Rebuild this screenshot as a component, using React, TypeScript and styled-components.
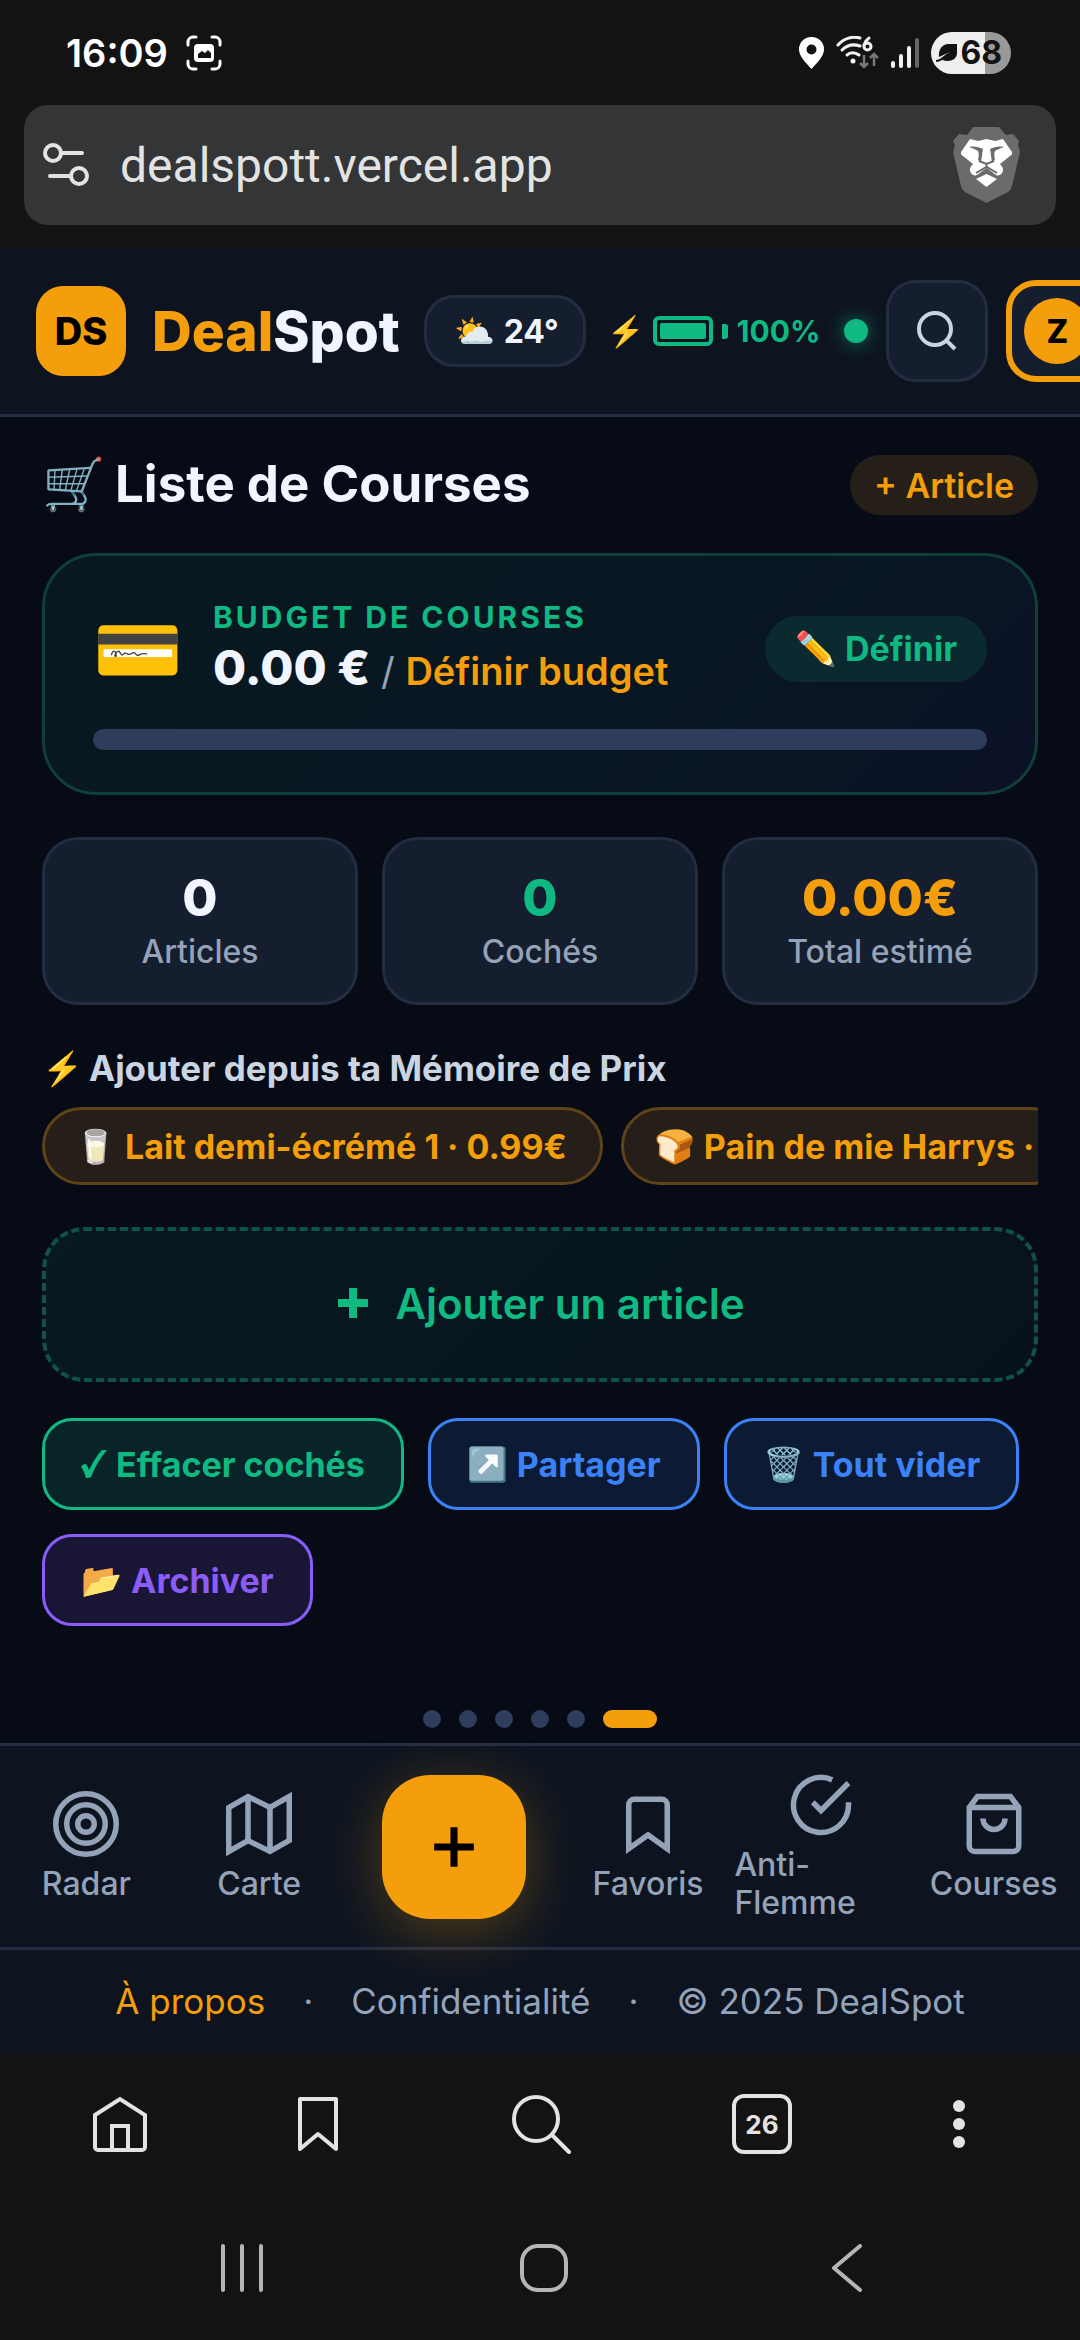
import type { ReactNode } from 'react';
import styled, { createGlobalStyle, css } from 'styled-components';

// ============================================================================
// Theme values
// ============================================================================

const color = {
  chrome: '#131313',
  bg: '#060b16',
  bar: '#0d1420',
  surface: '#151e2e',
  line: '#232d42',
  text: '#f1f5ff',
  soft: '#cbd5e1',
  muted: '#94a3b8',
  orange: '#f59e0b',
  green: '#10b981',
  blue: '#3b82f6',
  purple: '#8b5cf6',
  track: '#2f3d5c',
};

const GlobalStyle = createGlobalStyle`
  * {
    box-sizing: border-box;
  }

  body {
    margin: 0;
    background: ${color.chrome};
    font-family: Inter, 'Noto Sans', sans-serif;
    color: ${color.text};
  }

  button {
    margin: 0;
    padding: 0;
    border: none;
    background: none;
    color: inherit;
    font: inherit;
    cursor: pointer;
  }

  h1, h2, p {
    margin: 0;
  }

  svg {
    display: block;
    flex: none;
  }
`;

// ============================================================================
// Phone status bar and address bar
// ============================================================================

const Page = styled.div`
  display: flex;
  flex-direction: column;
  min-height: 100vh;
  overflow: hidden;
`;

const StatusBar = styled.div`
  display: flex;
  align-items: center;
  justify-content: space-between;
  height: 105px;
  padding: 0 69px 0 66px;
`;

const StatusGroup = styled.div<{ $gap: number }>`
  display: flex;
  align-items: center;
  gap: ${({ $gap }) => $gap}px;
`;

const Clock = styled.span`
  font-size: 38px;
  font-weight: 600;
  color: #fff;
`;

const BatteryPill = styled.span`
  display: flex;
  align-items: center;
  gap: 2px;
  height: 42px;
  padding: 0 9px 0 5px;
  border-radius: 21px;
  background: linear-gradient(90deg, #eee 68%, #999 68%);
  color: #131313;
  font-size: 32px;
  font-weight: 700;
`;

const AddressBar = styled.div`
  display: flex;
  align-items: center;
  height: 120px;
  margin: 0 24px 23px;
  padding: 0 36px 0 18px;
  border-radius: 24px;
  background: #333536;
`;

const AddressInput = styled.input`
  flex: 1;
  min-width: 0;
  margin-left: 30px;
  padding: 0;
  border: none;
  outline: none;
  background: transparent;
  color: #e3e3e3;
  font-family: Roboto, sans-serif;
  font-size: 48px;
`;

// ============================================================================
// App header
// ============================================================================

const Header = styled.header`
  display: flex;
  align-items: center;
  height: 169px;
  padding-left: 36px;
  border-bottom: 3px solid ${color.line};
  background: ${color.bar};
  white-space: nowrap;

  > * {
    flex: none;
  }
`;

const LogoBox = styled.div`
  display: grid;
  place-items: center;
  width: 90px;
  height: 90px;
  border-radius: 27px;
  background: ${color.orange};
  color: #000;
  font-size: 38px;
  font-weight: 800;
`;

const Brand = styled.h1`
  margin-left: 26px;
  font-size: 55px;
  font-weight: 800;

  span {
    color: ${color.orange};
  }
`;

const Weather = styled.div`
  display: flex;
  align-items: center;
  gap: 9px;
  height: 72px;
  margin-left: 24px;
  padding: 0 24px 0 27px;
  border: 3px solid ${color.line};
  border-radius: 30px;
  background: ${color.surface};
  font-size: 32px;
  font-weight: 700;
`;

const Power = styled.div`
  display: flex;
  align-items: center;
  gap: 9px;
  margin-left: 21px;
  color: ${color.green};
  font-size: 30px;
  font-weight: 700;
`;

const Cell = styled.span`
  width: 60px;
  height: 30px;
  padding: 3px;
  border: 4px solid ${color.green};
  border-radius: 6px;

  &::before {
    content: '';
    display: block;
    height: 16px;
    border-radius: 2px;
    background: ${color.green};
  }
`;

const CellTip = styled.span`
  width: 6px;
  height: 15px;
  border-radius: 0 3px 3px 0;
  background: ${color.green};
`;

const OnlineDot = styled.span`
  width: 24px;
  height: 24px;
  margin: 0 18px 0 24px;
  border-radius: 50%;
  background: ${color.green};
  box-shadow: 0 0 18px rgba(16, 185, 129, 0.6);
`;

const SquareButton = styled.button<{ $accent?: boolean }>`
  display: grid;
  place-items: center;
  width: 102px;
  height: 102px;
  margin-right: 18px;
  border: 3px solid ${color.line};
  border-radius: 30px;
  background: ${color.surface};
  color: ${color.soft};

  ${({ $accent }) =>
    $accent &&
    css`
      border: 6px solid ${color.orange};
    `}
`;

const Avatar = styled.span`
  display: grid;
  place-items: center;
  width: 66px;
  height: 66px;
  border-radius: 50%;
  background: ${color.orange};
  color: #000;
  font-size: 32px;
  font-weight: 800;
`;

// ============================================================================
// Shopping list
// ============================================================================

const Main = styled.main`
  flex: 1;
  display: flex;
  flex-direction: column;
  padding: 38px 42px 15px;
  background: ${color.bg};
`;

const TitleRow = styled.div`
  display: flex;
  align-items: center;
  justify-content: space-between;
  height: 60px;
`;

const Title = styled.h2`
  display: flex;
  align-items: center;
  gap: 9px;
  padding-bottom: 3px;
  font-size: 51px;
  font-weight: 700;
`;

const AddPill = styled.button`
  height: 60px;
  padding: 0 24px;
  border-radius: 30px;
  background: #261e18;
  color: ${color.orange};
  font-size: 34px;
  font-weight: 600;
`;

const BudgetCard = styled.section`
  margin-top: 38px;
  padding: 42px 48px;
  border: 3px solid #103e3a;
  border-radius: 54px;
  background: linear-gradient(135deg, #07191f, #091623 70%, #0b1127);
`;

const BudgetTop = styled.div`
  display: flex;
  align-items: center;
  height: 101px;
`;

const BudgetText = styled.div`
  flex: 1;
  margin-left: 30px;
  padding-top: 6px;
`;

const BudgetLabel = styled.p`
  color: ${color.green};
  font-size: 30px;
  font-weight: 700;
  line-height: 36px;
  letter-spacing: 3px;
`;

const BudgetAmount = styled.p`
  color: ${color.muted};
  font-size: 38px;
  line-height: 66px;

  strong {
    color: ${color.text};
    font-size: 48px;
    font-weight: 800;
  }

  em {
    color: ${color.orange};
    font-style: normal;
    font-weight: 600;
  }
`;

const DefineButton = styled.button`
  display: flex;
  align-items: center;
  gap: 9px;
  height: 66px;
  padding: 0 30px;
  border-radius: 33px;
  background: #0b2a30;
  color: ${color.green};
  font-size: 34px;
  font-weight: 700;
`;

const Track = styled.div`
  height: 21px;
  margin-top: 30px;
  border-radius: 11px;
  background: ${color.track};
`;

const Stats = styled.div`
  display: grid;
  grid-template-columns: repeat(3, 1fr);
  gap: 24px;
  margin-top: 42px;
`;

const Stat = styled.div`
  height: 168px;
  padding-top: 25px;
  border: 3px solid ${color.line};
  border-radius: 36px;
  background: ${color.surface};
  text-align: center;
`;

const StatValue = styled.p<{ $color: string }>`
  color: ${({ $color }) => $color};
  font-size: 51px;
  font-weight: 800;
  line-height: 66px;
`;

const StatLabel = styled.p`
  color: ${color.muted};
  font-size: 32px;
  font-weight: 500;
  line-height: 42px;
`;

const SectionTitle = styled.h2`
  display: flex;
  align-items: center;
  gap: 6px;
  height: 42px;
  margin-top: 42px;
  color: ${color.soft};
  font-size: 35px;
  font-weight: 700;
`;

const ChipRow = styled.div`
  display: flex;
  gap: 18px;
  margin-top: 18px;
  overflow: hidden;
`;

const Chip = styled.button`
  flex: none;
  display: flex;
  align-items: center;
  gap: 9px;
  height: 78px;
  padding: 0 33px 0 30px;
  border: 3px solid #5f4318;
  border-radius: 39px;
  background: #261e18;
  color: ${color.orange};
  font-size: 34px;
  font-weight: 700;
  white-space: nowrap;
`;

const AddArticle = styled.button`
  display: flex;
  align-items: center;
  justify-content: center;
  gap: 24px;
  height: 155px;
  margin-top: 42px;
  padding-bottom: 3px;
  border: 4px dashed #105247;
  border-radius: 42px;
  background: linear-gradient(135deg, #071a20, #08121d);
  color: ${color.green};
  font-size: 42px;
  font-weight: 600;
`;

const Actions = styled.div`
  display: flex;
  flex-wrap: wrap;
  gap: 24px;
  margin-top: 36px;
`;

const Action = styled.button<{ $color: string; $bg: string }>`
  display: flex;
  align-items: center;
  gap: 9px;
  height: 92px;
  padding: 0 36px;
  border: 3px solid ${({ $color }) => $color};
  border-radius: 30px;
  background: ${({ $bg }) => $bg};
  color: ${({ $color }) => $color};
  font-size: 34px;
  font-weight: 700;
`;

const Dots = styled.div`
  display: flex;
  justify-content: center;
  gap: 18px;
  margin-top: auto;
`;

const Dot = styled.span<{ $active?: boolean }>`
  width: ${({ $active }) => ($active ? 54 : 18)}px;
  height: 18px;
  border-radius: 9px;
  background: ${({ $active }) => ($active ? color.orange : color.track)};
`;

// ============================================================================
// Bottom bars
// ============================================================================

const TabBar = styled.nav`
  display: grid;
  grid-template-columns: 1fr 1fr 216px 1fr 1fr 1fr;
  align-items: center;
  height: 204px;
  border-top: 3px solid ${color.line};
  background: ${color.bar};
`;

const Tab = styled.button`
  display: flex;
  flex-direction: column;
  align-items: center;
  gap: 8px;
  color: ${color.muted};
  font-size: 32px;
  font-weight: 500;
  line-height: 38px;
  text-align: left;
`;

const Fab = styled.button`
  position: relative;
  display: grid;
  place-items: center;
  justify-self: center;
  width: 144px;
  height: 144px;
  border-radius: 48px;
  background: ${color.orange};
  box-shadow: 0 12px 60px rgba(245, 158, 11, 0.3);
  color: #000;
`;

const Footer = styled.footer`
  display: flex;
  align-items: center;
  justify-content: center;
  gap: 38px;
  height: 105px;
  border-top: 3px solid ${color.line};
  background: ${color.bar};
  color: ${color.muted};
  font-size: 35px;
`;

const FooterLink = styled.a<{ $accent?: boolean }>`
  color: ${({ $accent }) => ($accent ? color.orange : color.muted)};
  text-decoration: none;
`;

const BrowserBar = styled.nav`
  display: grid;
  grid-template-columns: 240fr 156fr 290fr 152fr 242fr;
  place-items: center;
  height: 144px;
  color: #e3e3e3;
`;

const TabCount = styled.span`
  display: grid;
  place-items: center;
  width: 60px;
  height: 60px;
  border: 4px solid #e3e3e3;
  border-radius: 12px;
  font-size: 26px;
  font-weight: 700;
`;

const SystemBar = styled.nav`
  display: grid;
  grid-template-columns: repeat(3, 1fr);
  place-items: center;
  height: 144px;
  padding: 0 82px 0 91px;
  color: #b5b5b5;
`;

// ============================================================================
// Icons
// ============================================================================

const Emoji = styled.span<{ $size: number }>`
  font-size: ${({ $size }) => $size}px;
  line-height: 1;
`;

interface LineIconProps {
  size: number;
  stroke?: number;
  box?: number;
  children: ReactNode;
}

function LineIcon({ size, stroke = 2, box = 24, children }: LineIconProps) {
  return (
    <svg
      width={size}
      height={size}
      viewBox={`0 0 ${box} ${box}`}
      fill="none"
      stroke="currentColor"
      strokeWidth={stroke}
      aria-hidden="true"
    >
      {children}
    </svg>
  );
}

function CaptureIcon() {
  return (
    <svg width="36" height="36" viewBox="0 0 36 36" fill="none" aria-hidden="true">
      <path
        d="M2 10V7a5 5 0 0 1 5-5h3M26 2h3a5 5 0 0 1 5 5v3M34 26v3a5 5 0 0 1-5 5h-3M10 34H7a5 5 0 0 1-5-5v-3"
        stroke="#fff"
        strokeWidth="3"
        strokeLinecap="round"
      />
      <rect x="8" y="9" width="20" height="18" rx="4" fill="#fff" />
      <path d="M12 23v-4l4-3 3 2 3-3 3 3v5z" fill="#131313" />
    </svg>
  );
}

function PinIcon() {
  return (
    <svg width="25" height="32" viewBox="0 0 25 32" aria-hidden="true">
      <path
        d="M12.500 0A12.300 12.300 0 0 0 0 12.500C0 19 7 26 12.500 32 18 26 25 19 25 12.500A12.300 12.300 0 0 0 12.500 0zm0 7.500a5 5 0 1 1 0 10 5 5 0 0 1 0-10z"
        fill="#fff"
        fillRule="evenodd"
      />
    </svg>
  );
}

function WifiIcon() {
  return (
    <svg width="43" height="33" viewBox="0 0 43 33" fill="none" aria-hidden="true">
      <g stroke="#f2f2f2" strokeWidth="3" strokeLinecap="round">
        <path d="M2 9C8 2 17 0 24 2" />
        <path d="M6 14c5-5 12-6 18-4" />
        <path d="M11 19c3-3 8-3 12 0" />
        <path d="M33 2c-3 2-4 4-5 7" />
        <circle cx="31.500" cy="10.500" r="3.500" />
      </g>
      <circle cx="17" cy="25" r="2.500" fill="#f2f2f2" />
      <path d="M28 19v12m-4-4 4 4 4-4M38 30V18m-4 4 4-4 4 4" stroke="#777" strokeWidth="2.500" />
    </svg>
  );
}

function SignalIcon() {
  return (
    <svg width="28" height="30" viewBox="0 0 28 30" strokeWidth="4" strokeLinecap="round" aria-hidden="true">
      <path d="M2 25v3M10 18v10M18 10v18" stroke="#f2f2f2" />
      <path d="M26 2v26" stroke="#666" />
    </svg>
  );
}

function LeafIcon() {
  return (
    <svg width="22" height="20" viewBox="0 0 22 20" aria-hidden="true">
      <path d="M21 1v9c0 5-4 8-10 8-3 0-5-1-6-3l9-6-11 5C2 6 7 0 14 1z" fill="#131313" />
      <path d="M0 18c4 0 8-3 12-7" stroke="#131313" strokeWidth="2" fill="none" />
    </svg>
  );
}

function SiteSettingsIcon() {
  return (
    <svg width="48" height="46" viewBox="0 0 48 46" fill="none" stroke="#e3e3e3" strokeWidth="4" aria-hidden="true">
      <circle cx="11" cy="11" r="8" />
      <circle cx="37" cy="34" r="8" />
      <path d="M19 11h21M8 34h21" strokeLinecap="round" />
    </svg>
  );
}

function BraveIcon() {
  return (
    <svg width="67" height="76" viewBox="0 0 67 76" aria-hidden="true">
      <path
        d="M20 0h26l7 8 7-1 6 7-1 4 2 7-8 34c-1 3-2 4-4 6L33.500 76 12 65c-2-2-3-3-4-6L0 25l2-7-2-4 6-7 8 1z"
        fill="#6b6b6b"
      />
      <path
        d="M17 12l8 2 8.500-2 8.500 2 8-2 9 13c0 2 0 3-2 4l-10 8c3 3 4 6 2 9-1 2-4 3-6 2l-9.500-7-9.500 7c-2 1-5 0-6-2-2-3-1-6 2-9l-10-8c-2-1-2-2-2-4z"
        fill="#fff"
      />
      <path d="M23 52l10.500-5L44 52l-10.500 8z" fill="#fff" />
      {/* brows and sides of the nose */}
      <path d="M16 20c5-1 10 0 14 2-1 4-1 9-2 13l-3-2c1-4 1-7 0-9-3-2-6-3-9-4z" fill="#6b6b6b" />
      <path d="M51 20c-5-1-10 0-14 2 1 4 1 9 2 13l3-2c-1-4-1-7 0-9 3-2 6-3 9-4z" fill="#6b6b6b" />
      <path
        d="M26 34l7.500 3 7.500-3M33.500 41v-4M23 46l10.500-6L44 46"
        stroke="#6b6b6b"
        strokeWidth="2"
        fill="none"
      />
    </svg>
  );
}

function CheckIcon() {
  return (
    <svg width="26" height="28" viewBox="0 0 26 28" aria-hidden="true">
      <path d="M0 17c1-2 3-3 4-3 2 0 3 3 4 6C12 12 16 5 21 0h5C19 8 14 17 10 27c-2 1-4 1-5 1-1-4-3-9-5-11z" fill="currentColor" />
    </svg>
  );
}

// ============================================================================
// Data
// ============================================================================

const stats = [
  { value: '0', label: 'Articles', color: color.text },
  { value: '0', label: 'Cochés', color: color.green },
  { value: '0.00€', label: 'Total estimé', color: color.orange },
];

const memory = [
  { icon: '🥛', text: 'Lait demi-écrémé 1 · 0.99€' },
  { icon: '🍞', text: 'Pain de mie Harrys ·' },
];

// ============================================================================
// Component
// ============================================================================

export default function App() {
  return (
    <Page>
      <GlobalStyle />

      <StatusBar>
        <StatusGroup $gap={18}>
          <Clock>16:09</Clock>
          <CaptureIcon />
        </StatusGroup>
        <StatusGroup $gap={12}>
          <PinIcon />
          <WifiIcon />
          <SignalIcon />
          <BatteryPill>
            <LeafIcon />
            68
          </BatteryPill>
        </StatusGroup>
      </StatusBar>

      <AddressBar>
        <SiteSettingsIcon />
        <AddressInput type="text" aria-label="Adresse" defaultValue="dealspott.vercel.app" />
        <BraveIcon />
      </AddressBar>

      <Header>
        <LogoBox>DS</LogoBox>
        <Brand>
          <span>Deal</span>Spot
        </Brand>
        <Weather>
          <Emoji $size={33}>⛅</Emoji>
          24°
        </Weather>
        <Power>
          <Emoji $size={30}>⚡</Emoji>
          <Cell />
          <CellTip />
          100%
        </Power>
        <OnlineDot />
        <SquareButton type="button" aria-label="Rechercher">
          <LineIcon size={48}>
            <circle cx="11" cy="11" r="8" />
            <path d="m21 21-4.350-4.350" />
          </LineIcon>
        </SquareButton>
        <SquareButton type="button" $accent aria-label="Profil">
          <Avatar>Z</Avatar>
        </SquareButton>
      </Header>

      <Main>
        <TitleRow>
          <Title>
            <Emoji $size={51}>🛒</Emoji>
            Liste de Courses
          </Title>
          <AddPill type="button">+ Article</AddPill>
        </TitleRow>

        <BudgetCard>
          <BudgetTop>
            <Emoji $size={72}>💳</Emoji>
            <BudgetText>
              <BudgetLabel>BUDGET DE COURSES</BudgetLabel>
              <BudgetAmount>
                <strong>0.00 €</strong> / <em>Définir budget</em>
              </BudgetAmount>
            </BudgetText>
            <DefineButton type="button">
              <Emoji $size={33}>✏️</Emoji>
              Définir
            </DefineButton>
          </BudgetTop>
          <Track />
        </BudgetCard>

        <Stats>
          {stats.map((stat) => (
            <Stat key={stat.label}>
              <StatValue $color={stat.color}>{stat.value}</StatValue>
              <StatLabel>{stat.label}</StatLabel>
            </Stat>
          ))}
        </Stats>

        <SectionTitle>
          <Emoji $size={33}>⚡</Emoji>
          Ajouter depuis ta Mémoire de Prix
        </SectionTitle>
        <ChipRow>
          {memory.map((item) => (
            <Chip type="button" key={item.text}>
              <Emoji $size={33}>{item.icon}</Emoji>
              {item.text}
            </Chip>
          ))}
        </ChipRow>

        <AddArticle type="button">
          <LineIcon size={36} stroke={8} box={36}>
            <path d="M18 3v30M3 18h30" />
          </LineIcon>
          Ajouter un article
        </AddArticle>

        <Actions>
          <Action type="button" $color={color.green} $bg="#082428">
            <CheckIcon />
            Effacer cochés
          </Action>
          <Action type="button" $color={color.blue} $bg="#0d1a34">
            <Emoji $size={33}>↗️</Emoji>
            Partager
          </Action>
          <Action type="button" $color={color.blue} $bg="#0d1a34">
            <Emoji $size={33}>🗑️</Emoji>
            Tout vider
          </Action>
          <Action type="button" $color={color.purple} $bg="#181634">
            <Emoji $size={33}>📂</Emoji>
            Archiver
          </Action>
        </Actions>

        <Dots>
          <Dot />
          <Dot />
          <Dot />
          <Dot />
          <Dot />
          <Dot $active />
        </Dots>
      </Main>

      <TabBar>
        <Tab type="button">
          <LineIcon size={66}>
            <circle cx="12" cy="12" r="11" />
            <circle cx="12" cy="12" r="7" />
            <circle cx="12" cy="12" r="3" />
          </LineIcon>
          Radar
        </Tab>
        <Tab type="button">
          <LineIcon size={66}>
            <path d="M1 6v16l7-4 8 4 7-4V2l-7 4-8-4zM8 2v16M16 6v16" />
          </LineIcon>
          Carte
        </Tab>
        <Fab type="button" aria-label="Ajouter">
          <LineIcon size={68} stroke={2.5}>
            <path d="M12 5v14M5 12h14" />
          </LineIcon>
        </Fab>
        <Tab type="button">
          <LineIcon size={66}>
            <path d="m19 21-7-5-7 5V5a2 2 0 0 1 2-2h10a2 2 0 0 1 2 2z" />
          </LineIcon>
          Favoris
        </Tab>
        <Tab type="button">
          <LineIcon size={66}>
            <path d="M22 11v1a10 10 0 1 1-5.930-9.140M22 4 12 14l-3-3" />
          </LineIcon>
          Anti-Flemme
        </Tab>
        <Tab type="button">
          <LineIcon size={66}>
            <path d="M6 2 3 6v14a2 2 0 0 0 2 2h14a2 2 0 0 0 2-2V6l-3-4zM3 6h18M16 10a4 4 0 0 1-8 0" />
          </LineIcon>
          Courses
        </Tab>
      </TabBar>

      <Footer>
        <FooterLink href="#apropos" $accent>
          À propos
        </FooterLink>
        <span>·</span>
        <FooterLink href="#confidentialite">Confidentialité</FooterLink>
        <span>·</span>
        <span>© 2025 DealSpot</span>
      </Footer>

      <BrowserBar>
        <button type="button" aria-label="Accueil">
          <LineIcon size={60} box={60} stroke={4}>
            <path d="M5 21 30 5l25 16v32a3 3 0 0 1-3 3H8a3 3 0 0 1-3-3zM22 56V32h16v24" />
          </LineIcon>
        </button>
        <button type="button" aria-label="Favoris du navigateur">
          <LineIcon size={60} box={60} stroke={4}>
            <path d="M12 5h36v50L30 40 12 55z" strokeLinejoin="round" />
          </LineIcon>
        </button>
        <button type="button" aria-label="Recherche web">
          <LineIcon size={60} box={60} stroke={4}>
            <circle cx="25" cy="25" r="22" />
            <path d="m41 41 17 17" strokeLinecap="round" />
          </LineIcon>
        </button>
        <button type="button" aria-label="Onglets">
          <TabCount>26</TabCount>
        </button>
        <button type="button" aria-label="Menu">
          <svg width="12" height="48" viewBox="0 0 12 48" fill="currentColor" aria-hidden="true">
            <circle cx="6" cy="6" r="6" />
            <circle cx="6" cy="24" r="6" />
            <circle cx="6" cy="42" r="6" />
          </svg>
        </button>
      </BrowserBar>

      <SystemBar>
        <button type="button" aria-label="Applications récentes">
          <LineIcon size={48} box={48} stroke={4}>
            <path d="M5 2v44M24 2v44M43 2v44" strokeLinecap="round" />
          </LineIcon>
        </button>
        <button type="button" aria-label="Écran d'accueil">
          <LineIcon size={48} box={48} stroke={4}>
            <rect x="2" y="2" width="44" height="44" rx="16" />
          </LineIcon>
        </button>
        <button type="button" aria-label="Retour">
          <LineIcon size={48} box={48} stroke={4}>
            <path d="M37 2 11 24l26 22" strokeLinecap="round" strokeLinejoin="round" />
          </LineIcon>
        </button>
      </SystemBar>
    </Page>
  );
}
